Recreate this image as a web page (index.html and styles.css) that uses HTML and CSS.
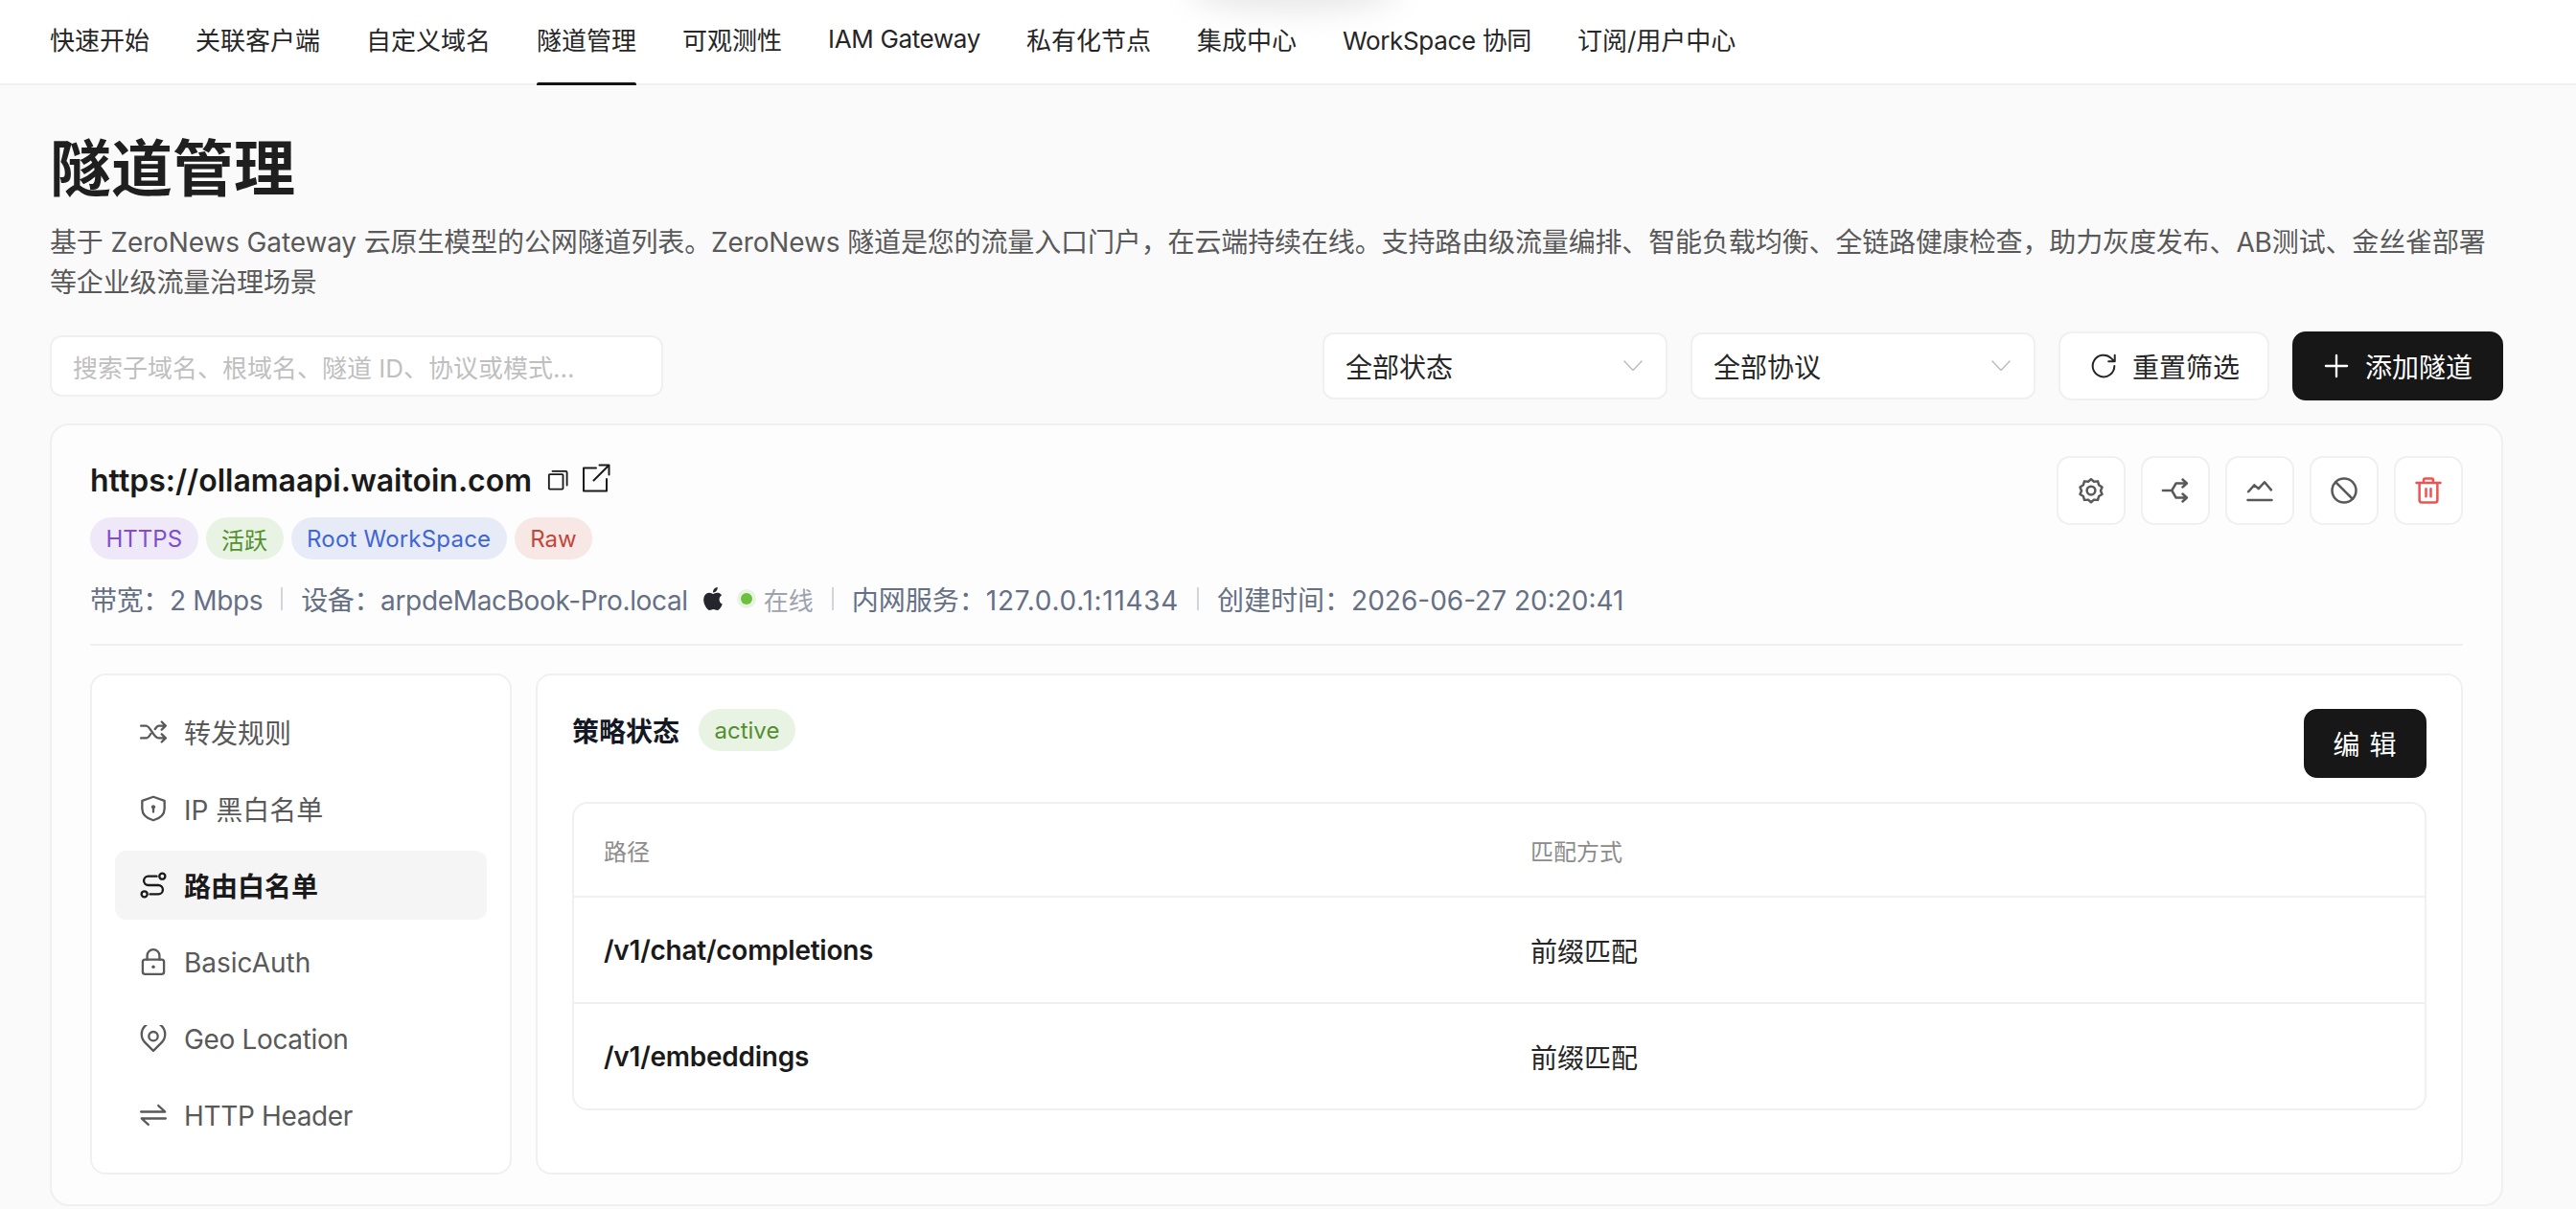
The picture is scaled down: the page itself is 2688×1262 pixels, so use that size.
FILE: index.html
```html
<!DOCTYPE html>
<html lang="zh-CN">
<head>
  <meta charset="UTF-8">
  <meta name="viewport" content="width=device-width, initial-scale=1.0">
  <title>隧道管理</title>
  <link rel="stylesheet" href="styles.css">
</head>
<body>
  <!-- Top navigation -->
  <nav class="top-nav">
    <a class="nav-item">快速开始</a>
    <a class="nav-item">关联客户端</a>
    <a class="nav-item">自定义域名</a>
    <a class="nav-item active">隧道管理</a>
    <a class="nav-item">可观测性</a>
    <a class="nav-item latin">IAM Gateway</a>
    <a class="nav-item">私有化节点</a>
    <a class="nav-item">集成中心</a>
    <a class="nav-item latin">WorkSpace 协同</a>
    <a class="nav-item">订阅/用户中心</a>
  </nav>
  <div class="top-glow"></div>

  <main class="page">
    <h1>隧道管理</h1>
    <p class="desc">基于 ZeroNews Gateway 云原生模型的公网隧道列表。ZeroNews 隧道是您的流量入口门户，在云端持续在线。支持路由级流量编排、智能负载均衡、全链路健康检查，助力灰度发布、AB测试、金丝雀部署等企业级流量治理场景</p>

    <!-- Filters -->
    <div class="toolbar">
      <div class="search">搜索子域名、根域名、隧道 ID、协议或模式...</div>
      <div class="toolbar-right">
        <div class="select">全部状态
          <svg class="chevron" viewBox="0 0 20 12"><path d="M1 1l9 9.500L19 1"/></svg>
        </div>
        <div class="select">全部协议
          <svg class="chevron" viewBox="0 0 20 12"><path d="M1 1l9 9.500L19 1"/></svg>
        </div>
        <button class="btn">
          <svg class="btn-icon reset-icon" viewBox="0 0 24 24"><path d="M20.500 12a8.500 8.500 0 1 1-2.600-6.100L20.500 8.400M20.800 3.600v4.900h-4.900"/></svg>
          重置筛选
        </button>
        <button class="btn btn-dark">
          <svg class="btn-icon" viewBox="0 0 24 24"><path d="M12 2.500v19M2.500 12h19"/></svg>
          添加隧道
        </button>
      </div>
    </div>

    <!-- Tunnel card -->
    <section class="card">
      <div class="card-head">
        <div class="card-info">
          <div class="url-row">
            <span class="url">https://ollamaapi.waitoin.com</span>
            <svg class="copy-icon" viewBox="0 0 24 24"><rect x="2" y="5.500" width="16" height="17" rx="1"/><path d="M6 2h15a1.500 1.500 0 0 1 1.500 1.500V18"/></svg>
            <svg class="link-icon" viewBox="0 0 30 30"><path d="M15 4.500H2v24h24V16M12.500 17.500L28 2M18.500 1.500H28.500V11.500"/></svg>
          </div>
          <div class="tags">
            <span class="tag tag-purple">HTTPS</span>
            <span class="tag tag-green">活跃</span>
            <span class="tag tag-blue">Root WorkSpace</span>
            <span class="tag tag-red">Raw</span>
          </div>
          <div class="meta">
            <span class="latin">带宽：2 Mbps</span>
            <i class="sep"></i>
            <span class="latin">设备：arpdeMacBook-Pro.local</span>
            <svg class="apple" viewBox="0 0 24 24"><path d="M12.152 6.896c-.948 0-2.415-1.078-3.960-1.040-2.040.027-3.910 1.183-4.961 3.014-2.117 3.675-.546 9.103 1.519 12.090 1.013 1.454 2.208 3.090 3.792 3.039 1.520-.065 2.090-.987 3.935-.987 1.831 0 2.350.987 3.960.948 1.637-.026 2.676-1.480 3.676-2.948 1.156-1.688 1.636-3.325 1.662-3.415-.039-.013-3.182-1.221-3.220-4.857-.026-3.040 2.480-4.494 2.597-4.559-1.429-2.090-3.623-2.324-4.390-2.376-2-.156-3.675 1.090-4.610 1.090zM15.530 3.830c.843-1.012 1.400-2.427 1.245-3.830-1.207.052-2.662.805-3.532 1.818-.780.896-1.454 2.338-1.273 3.714 1.338.104 2.715-.688 3.559-1.701"/></svg>
            <i class="dot"></i>
            <span class="online">在线</span>
            <i class="sep"></i>
            <span>内网服务：<span class="addr">127.0.0.1:11434</span></span>
            <i class="sep"></i>
            <span>创建时间：2026-06-27 20:20:41</span>
          </div>
        </div>
        <div class="actions">
          <button class="icon-btn">
            <svg viewBox="0 0 24 24"><path d="M12 2.500l2.400 2.100 3.200-.3.900 3.100 2.700 1.800-1.200 3 1.200 3-2.700 1.600-.900 3.100-3.200-.2L12 21.800l-2.400-2.100-3.200.2-.900-3.100-2.700-1.600 1.200-3-1.200-3 2.700-1.800.900-3.100 3.200.3z"/><circle cx="12" cy="12" r="3.500"/></svg>
          </button>
          <button class="icon-btn">
            <svg viewBox="0 0 24 24"><path d="M1.500 12h7.500l3.500-6H21M9 12l3.500 6H21M18 2.800L21.500 6 18 9.200M18 14.800l3.500 3.200-3.500 3.200"/></svg>
          </button>
          <button class="icon-btn">
            <svg viewBox="0 0 24 24"><path d="M2.500 13l5-5.500 3.500 3 5-5.500 5.500 6.500M2 20h20"/></svg>
          </button>
          <button class="icon-btn">
            <svg viewBox="0 0 24 24"><circle cx="12" cy="12" r="10"/><path d="M5 5l14 14"/></svg>
          </button>
          <button class="icon-btn danger">
            <svg viewBox="0 0 24 24"><path d="M2 5.500h20M8 5.500V3.500a1.500 1.500 0 0 1 1.500-1.500h5A1.500 1.500 0 0 1 16 3.500v2M4.500 5.500V20a2 2 0 0 0 2 2h11a2 2 0 0 0 2-2V5.500M10 10.500v6.500M14 10.500v6.500"/></svg>
          </button>
        </div>
      </div>

      <div class="detail">
        <!-- Policy menu -->
        <aside class="side-menu">
          <div class="menu-item">
            <svg viewBox="0 0 24 24"><path d="M1 6.500h4.500c4 0 6.500 11 11 11H23M1 17.500h4.500c1.800 0 3-1.800 4.200-3.800M13.500 9.500c1-1.600 2-3 3.500-3H23M19.500 3l3.500 3.500-3.500 3.500M19.500 14l3.500 3.500-3.500 3.500"/></svg>
            <span>转发规则</span>
          </div>
          <div class="menu-item">
            <svg viewBox="0 0 24 24"><path d="M12 1.500l10 3.500v7c0 5-4 8.800-10 10.500C6 20.800 2 17 2 12V5z"/><circle class="filled" cx="12" cy="10.500" r="1.800"/><path d="M12 11v4"/></svg>
            <span>IP 黑白名单</span>
          </div>
          <div class="menu-item active">
            <svg viewBox="0 0 24 24"><circle cx="4" cy="20" r="2.600"/><circle cx="20" cy="4" r="2.600"/><path d="M15 4H7.500a4 4 0 0 0 0 8h9a4 4 0 0 1 0 8H9"/></svg>
            <span>路由白名单</span>
          </div>
          <div class="menu-item">
            <svg viewBox="0 0 24 24"><rect x="2.500" y="10" width="19" height="13" rx="2"/><path d="M6.500 10V6.500a5.500 5.500 0 0 1 11 0V10"/><circle class="filled" cx="12" cy="16.500" r="1.500"/></svg>
            <span class="en">BasicAuth</span>
          </div>
          <div class="menu-item">
            <svg viewBox="0 0 24 24"><path d="M12 23l-7.500-7.500a10.500 10.500 0 1 1 15 0z"/><circle cx="12" cy="10" r="4"/></svg>
            <span class="en latin">Geo Location</span>
          </div>
          <div class="menu-item">
            <svg viewBox="0 0 24 24"><path d="M1 9h21.500L16.500 3.500M23 15H1.500L7.500 20.500"/></svg>
            <span class="en latin">HTTP Header</span>
          </div>
        </aside>

        <!-- Policy content -->
        <div class="policy">
          <div class="policy-head">
            <div class="policy-status">
              <span class="policy-title">策略状态</span>
              <span class="tag tag-green">active</span>
            </div>
            <button class="btn btn-dark btn-edit">编 辑</button>
          </div>
          <div class="table-wrap">
            <table>
              <thead>
                <tr><th class="col-path">路径</th><th>匹配方式</th></tr>
              </thead>
              <tbody>
                <tr><td class="col-path path">/v1/chat/completions</td><td>前缀匹配</td></tr>
                <tr><td class="col-path path">/v1/embeddings</td><td>前缀匹配</td></tr>
              </tbody>
            </table>
          </div>
        </div>
      </div>
    </section>
  </main>
</body>
</html>
```

FILE: styles.css
```css
* {
  box-sizing: border-box;
}
html, body {
  margin: 0;
  padding: 0;
}
body {
  font-family: Inter, "Noto Sans CJK SC", sans-serif;
  background-color: #fafafa;
  color: #1a1a1a;
  overflow: hidden;
  position: relative;
}
button {
  font-family: inherit;
  cursor: pointer;
}
svg {
  fill: none;
  stroke: currentColor;
  stroke-width: 2;
  stroke-linecap: round;
  stroke-linejoin: round;
}
.latin {
  letter-spacing: -0.35px;
}

/* nav */
.top-nav {
  display: flex;
  gap: 48px;
  height: 89px;
  padding: 0 52px;
  background-color: #fff;
  border-bottom: 2px solid #f0f0f0;
}
.nav-item {
  position: relative;
  display: flex;
  align-items: center;
  font-size: 26px;
  color: #262626;
  padding-bottom: 6px;
}
.nav-item.active::after {
  content: "";
  position: absolute;
  left: 0;
  right: 0;
  bottom: -2px;
  height: 3px;
  background-color: #141414;
  border-radius: 2px 2px 0 0;
}
.top-glow {
  position: absolute;
  top: -34px;
  left: 1240px;
  width: 220px;
  height: 44px;
  border-radius: 50%;
  background-color: rgba(0, 0, 0, 0.1);
  filter: blur(16px);
}

/* page head */
.page {
  padding: 43px 76px 0 52px;
}
h1 {
  margin: 0;
  font-size: 64px;
  line-height: 88px;
  font-weight: 600;
  color: #1f1f1f;
}
.desc {
  margin: 12px 0 0;
  font-size: 28px;
  line-height: 42px;
  letter-spacing: -0.13px;
  color: #595959;
}

/* toolbar */
.toolbar {
  display: flex;
  align-items: center;
  justify-content: space-between;
  height: 72px;
  margin-top: 30px;
}
.search {
  display: flex;
  align-items: center;
  width: 640px;
  height: 64px;
  padding: 0 22px;
  background-color: #fff;
  border: 2px solid #f0f0f0;
  border-radius: 12px;
  font-size: 26px;
  color: #bfbfbf;
}
.toolbar-right {
  display: flex;
  align-items: center;
  gap: 24px;
}
.select {
  display: flex;
  align-items: center;
  justify-content: space-between;
  width: 360px;
  height: 70px;
  padding: 0 24px 0 22px;
  background-color: #fff;
  border: 2px solid #f0f0f0;
  border-radius: 12px;
  font-size: 28px;
  color: #262626;
}
.chevron {
  width: 20px;
  height: 12px;
  color: #bfbfbf;
  stroke-width: 1.6;
}
.btn {
  display: flex;
  align-items: center;
  justify-content: center;
  gap: 16px;
  width: 220px;
  height: 72px;
  padding: 0;
  background-color: #fff;
  border: 2px solid #f0f0f0;
  border-radius: 14px;
  font-size: 28px;
  color: #262626;
}
.btn-dark {
  background-color: #171717;
  border-color: #171717;
  color: #fff;
}
.btn-icon {
  width: 28px;
  height: 28px;
}
.reset-icon {
  width: 32px;
  height: 32px;
  margin-right: -2px;
  stroke-width: 1.5;
}

/* card */
.card {
  width: 2560px;
  margin-top: 24px;
  padding: 32px 40px 31px;
  background-color: #fdfdfd;
  border: 2px solid #f0f0f0;
  border-radius: 20px;
}
.card-head {
  display: flex;
  justify-content: space-between;
  align-items: flex-start;
  padding-bottom: 28px;
  border-bottom: 2px solid #f0f0f0;
}
.url-row {
  display: flex;
  align-items: center;
  height: 44px;
  margin-top: 3px;
}
.url {
  font-size: 32px;
  font-weight: 600;
  color: #1a1a1a;
}
.copy-icon {
  width: 22px;
  height: 22px;
  margin-left: 16px;
}
.link-icon {
  width: 30px;
  height: 30px;
  margin-left: 14px;
  margin-bottom: 4px;
}
.tags {
  display: flex;
  gap: 8px;
  margin-top: 17px;
}
.tag {
  display: inline-flex;
  align-items: center;
  height: 44px;
  padding: 0 16.5px;
  border-radius: 22px;
  font-size: 24px;
}
.tag-purple { background-color: #efe8f8; color: #7d4fd0; }
.tag-green { background-color: #e9f3e4; color: #52902e; }
.tag-blue { background-color: #e7ebf8; color: #3f66d4; letter-spacing: 0.2px; }
.tag-red { background-color: #f7e8e6; color: #c4463a; }
.meta {
  display: flex;
  align-items: center;
  height: 38px;
  margin-top: 22px;
  font-size: 28px;
  color: #667085;
  white-space: nowrap;
}
.addr {
  letter-spacing: 0.7px;
}
.sep {
  width: 2px;
  height: 24px;
  margin: 0 19px;
  background-color: #d0d5dc;
}
.apple {
  width: 24px;
  height: 26px;
  margin-left: 14px;
  fill: #25252e;
  stroke: none;
}
.dot {
  width: 12px;
  height: 12px;
  margin: 0 12px 0 17px;
  border-radius: 50%;
  background-color: #6cc13c;
  box-shadow: 0 0 0 4px #e9f3e4;
}
.online {
  font-size: 26px;
  color: #9ca3af;
}
.actions {
  display: flex;
  gap: 16px;
}
.icon-btn {
  display: flex;
  align-items: center;
  justify-content: center;
  width: 72px;
  height: 72px;
  padding: 0;
  background-color: #fff;
  border: 2px solid #f0f0f0;
  border-radius: 14px;
  color: #595959;
}
.icon-btn svg {
  width: 30px;
  height: 30px;
}
.icon-btn.danger {
  color: #ef5350;
}

/* detail */
.detail {
  display: flex;
  gap: 25px;
  margin-top: 29px;
}
.side-menu {
  display: flex;
  flex-direction: column;
  gap: 8px;
  width: 440px;
  flex-shrink: 0;
  padding: 23px 24px 24px;
  background-color: #fff;
  border: 2px solid #f0f0f0;
  border-radius: 16px;
}
.menu-item {
  display: flex;
  align-items: center;
  gap: 18px;
  height: 72px;
  padding-left: 26px;
  border-radius: 12px;
  font-size: 28px;
  color: #595959;
}
.menu-item svg {
  width: 28px;
  height: 28px;
  flex-shrink: 0;
}
.menu-item .filled {
  fill: currentColor;
  stroke: none;
}
.menu-item .en {
  padding-top: 2px;
}
.menu-item.active {
  background-color: #f5f5f5;
  color: #1a1a1a;
  font-weight: 600;
}
.policy {
  flex: 1;
  padding: 35px 36px 65px;
  background-color: #fff;
  border: 2px solid #f0f0f0;
  border-radius: 16px;
}
.policy-head {
  display: flex;
  justify-content: space-between;
  align-items: flex-start;
}
.policy-status {
  display: flex;
  align-items: center;
  gap: 20px;
}
.policy-title {
  font-size: 28px;
  font-weight: 600;
  color: #141824;
}
.btn-edit {
  width: 128px;
  letter-spacing: 1px;
}
.table-wrap {
  margin-top: 25px;
  border: 2px solid #f0f0f0;
  border-radius: 16px;
}
table {
  width: 100%;
  border-collapse: collapse;
}
th, td {
  padding: 0;
  text-align: left;
  border-bottom: 2px solid #f0f0f0;
}
th {
  height: 97px;
  font-size: 24px;
  font-weight: 400;
  color: #8c8c8c;
}
td {
  height: 111px;
  font-size: 28px;
  color: #262626;
}
tbody tr:last-child td {
  height: 110px;
  border-bottom: none;
}
.col-path {
  width: 998px;
  padding-left: 31px;
}
.path {
  font-weight: 600;
  letter-spacing: -0.25px;
  color: #1a1a1a;
}
```
